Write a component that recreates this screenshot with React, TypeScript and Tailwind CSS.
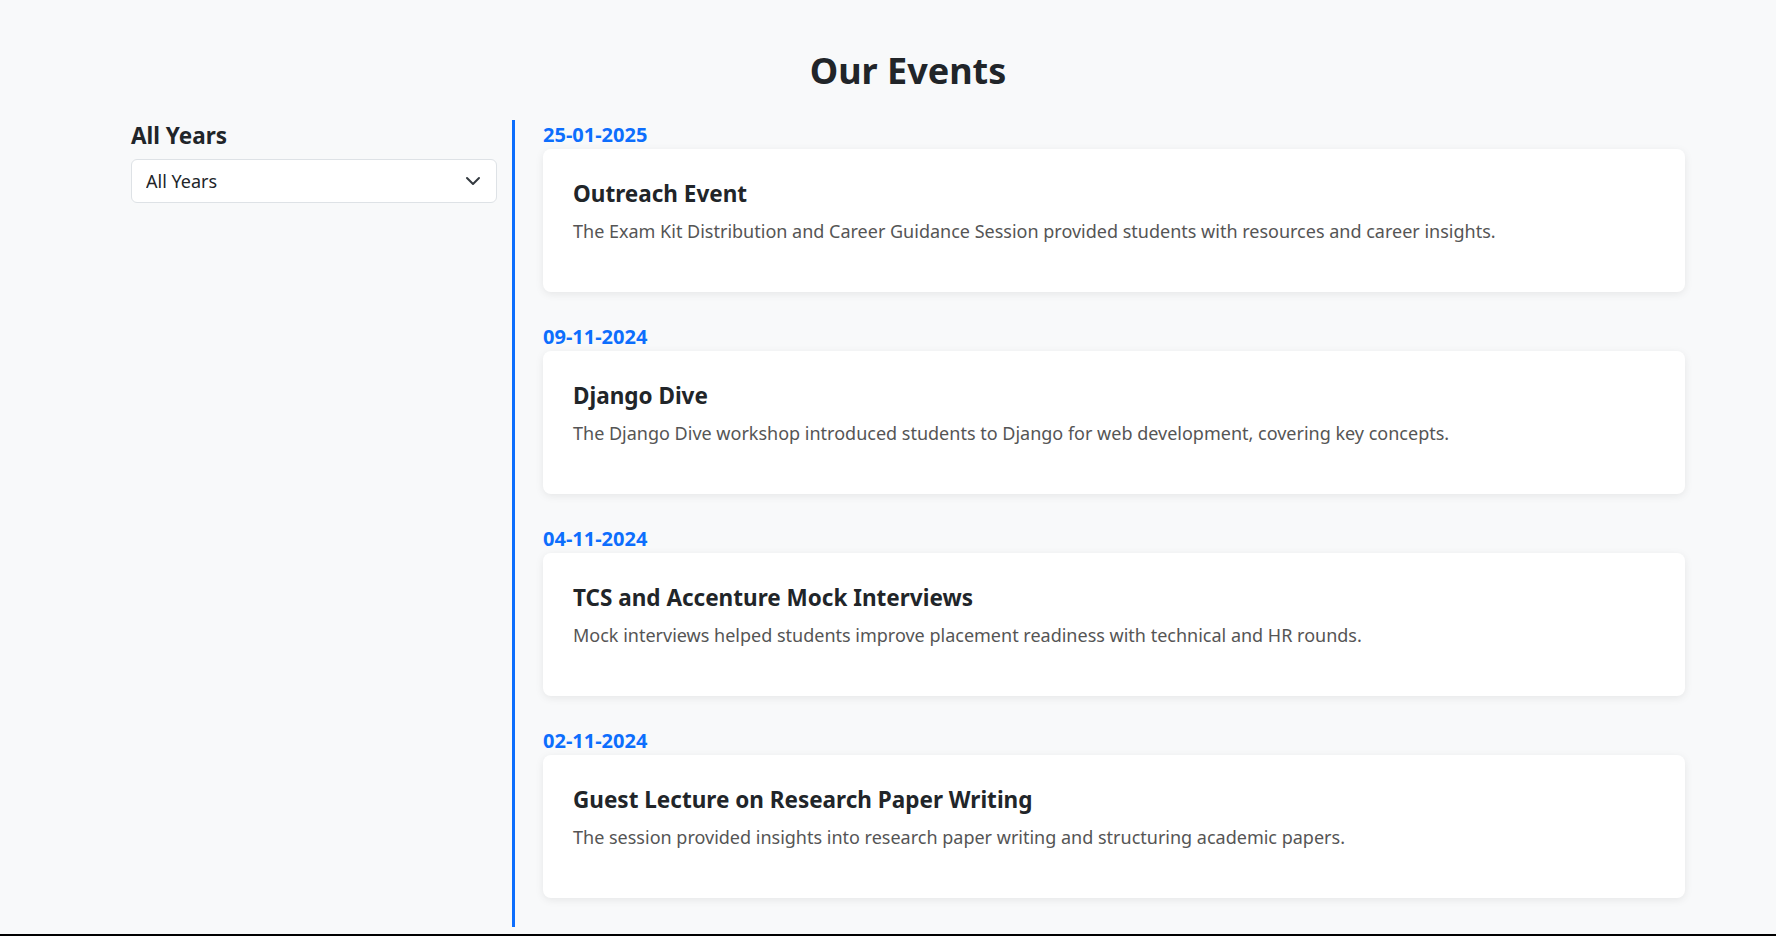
import { useState } from 'react';

interface EventItem {
  date: string;
  title: string;
  description: string;
}

const events: EventItem[] = [
  {
    date: '25-01-2025',
    title: 'Outreach Event',
    description:
      'The Exam Kit Distribution and Career Guidance Session provided students with resources and career insights.',
  },
  {
    date: '09-11-2024',
    title: 'Django Dive',
    description:
      'The Django Dive workshop introduced students to Django for web development, covering key concepts.',
  },
  {
    date: '04-11-2024',
    title: 'TCS and Accenture Mock Interviews',
    description: 'Mock interviews helped students improve placement readiness with technical and HR rounds.',
  },
  {
    date: '02-11-2024',
    title: 'Guest Lecture on Research Paper Writing',
    description: 'The session provided insights into research paper writing and structuring academic papers.',
  },
];

export default function App() {
  const [year, setYear] = useState('all');

  return (
    <div className="min-h-screen bg-[#f8f9fa] text-[#212529] font-['Noto_Sans',sans-serif]">
      <div className="ml-[131px] w-[1554px] pt-[49px]">
        <h1 className="text-center text-[36px] leading-[43px] font-bold">Our Events</h1>

        <div className="mt-[28px] flex">
          {/* filter column */}
          <div className="w-[381px] pr-[15px] pt-[1px]">
            <h2 className="text-[22.5px] leading-[29px] font-bold">All Years</h2>
            <div className="relative mt-[9px]">
              <select
                value={year}
                onChange={(e) => setYear(e.target.value)}
                className="w-full h-[44px] appearance-none rounded-[6px] border border-[#dee2e6] bg-white pl-[14px] pr-10 text-[18px] text-[#212529] outline-none"
              >
                <option value="all">All Years</option>
                <option value="2025">2025</option>
                <option value="2024">2024</option>
              </select>
              <svg
                className="pointer-events-none absolute right-[16px] top-[14px] w-4 h-4"
                viewBox="0 0 16 16"
                fill="none"
                stroke="#343a40"
                strokeWidth="2"
                strokeLinecap="round"
                strokeLinejoin="round"
              >
                <path d="m2 5 6 6 6-6" />
              </svg>
            </div>
          </div>

          {/* timeline column */}
          <div className="flex-1 border-l-[3px] border-[#0d6efd] pl-[28px] pt-[2px] pb-[29px]">
            <div className="flex flex-col gap-[32px]">
              {events.map((ev) => (
                <div key={ev.date}>
                  <div className="text-[20px] leading-[26px] font-bold text-[#0d6efd] mb-[1px]">{ev.date}</div>
                  <div className="h-[143px] rounded-[8px] bg-white px-[30px] pt-[31px] shadow-[0_2px_8px_rgba(0,0,0,0.08)]">
                    <h3 className="text-[22.5px] leading-[28px] font-bold">{ev.title}</h3>
                    <p className="mt-[10px] text-[18px] leading-[27px] text-[#555]">{ev.description}</p>
                  </div>
                </div>
              ))}
            </div>
          </div>
        </div>
      </div>
      <div className="mt-[7px] h-[120px] bg-black" />
    </div>
  );
}
